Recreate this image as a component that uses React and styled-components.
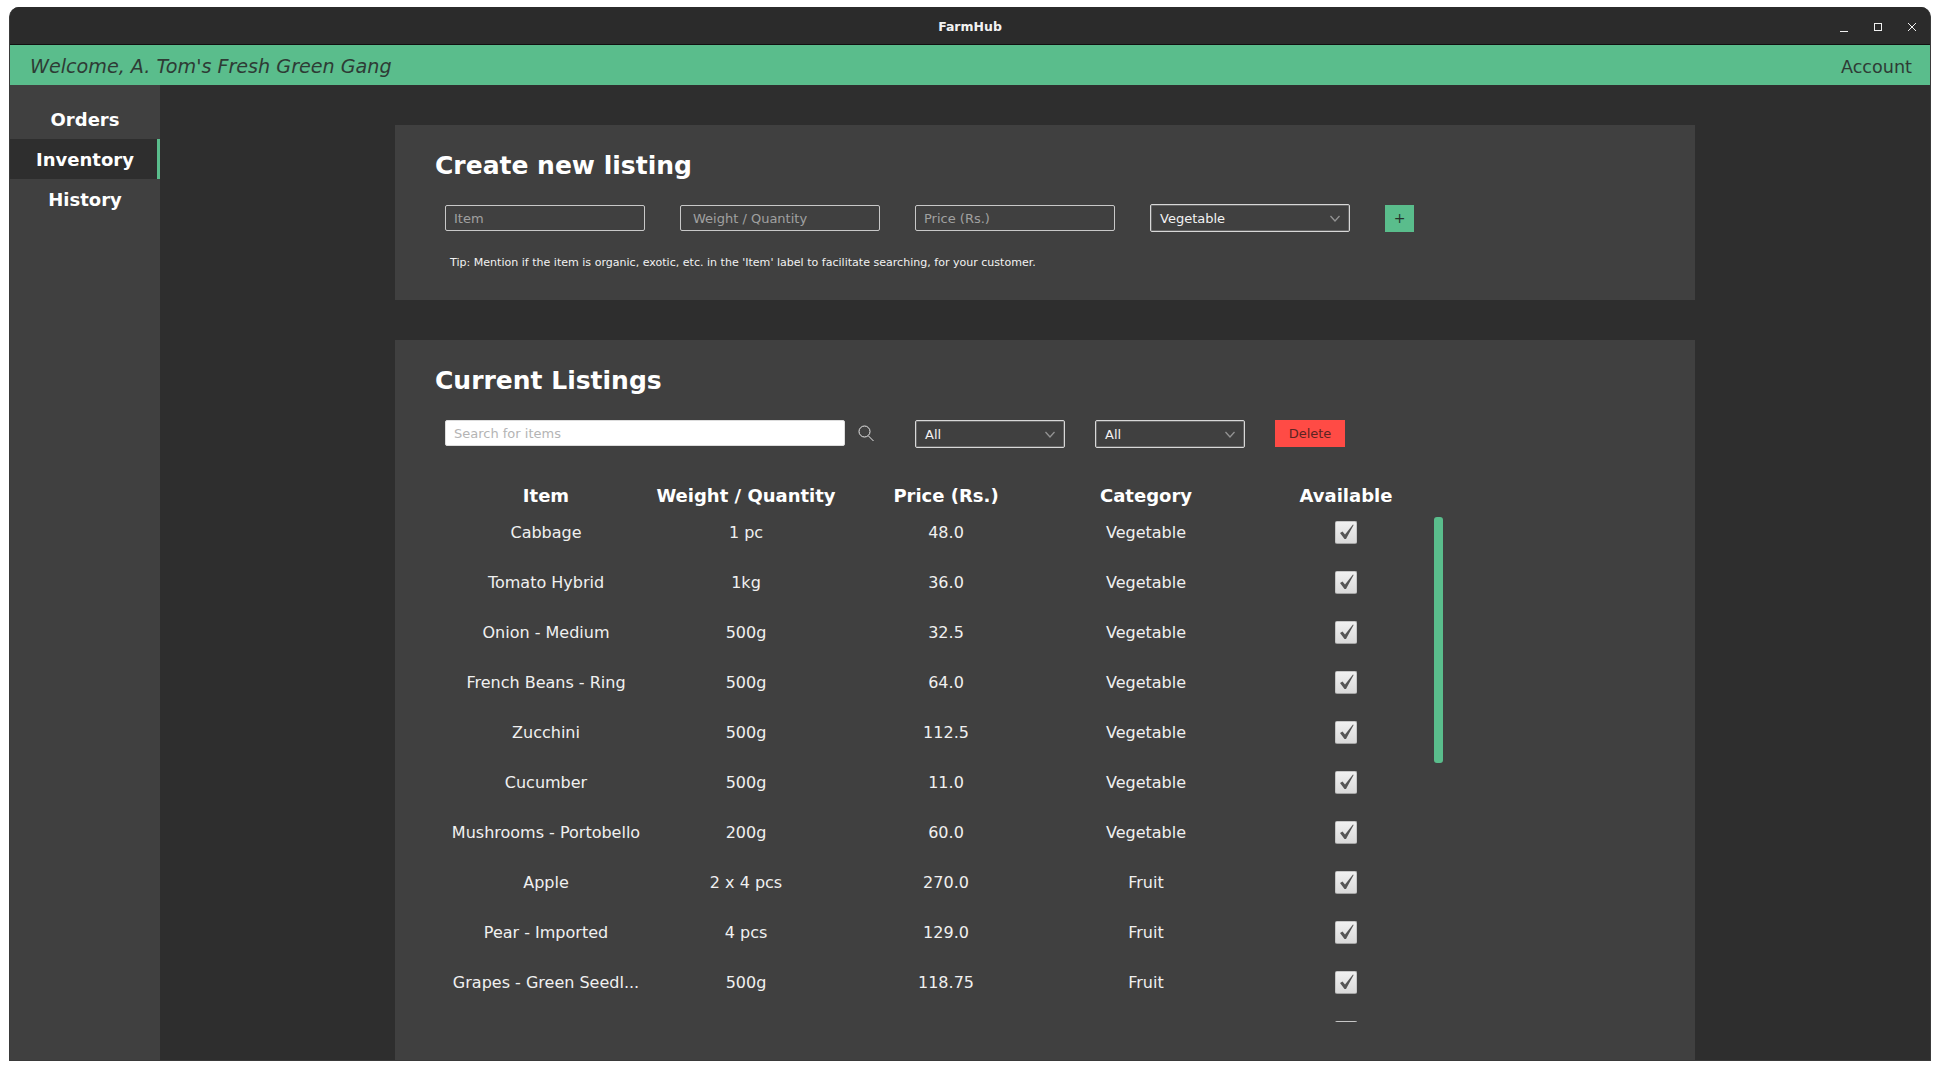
import React from 'react';
import styled, { createGlobalStyle } from 'styled-components';

const GREEN = '#5abd8c';
const FONT = '"DejaVu Sans", "Liberation Sans", sans-serif';

const listings = [
  ['Cabbage', '1 pc', '48.0', 'Vegetable'],
  ['Tomato Hybrid', '1kg', '36.0', 'Vegetable'],
  ['Onion - Medium', '500g', '32.5', 'Vegetable'],
  ['French Beans - Ring', '500g', '64.0', 'Vegetable'],
  ['Zucchini', '500g', '112.5', 'Vegetable'],
  ['Cucumber', '500g', '11.0', 'Vegetable'],
  ['Mushrooms - Portobello', '200g', '60.0', 'Vegetable'],
  ['Apple', '2 x 4 pcs', '270.0', 'Fruit'],
  ['Pear - Imported', '4 pcs', '129.0', 'Fruit'],
  ['Grapes - Green Seedl...', '500g', '118.75', 'Fruit'],
  ['', '', '', ''],
];

function Chevron() {
  return (
    <svg width="10" height="7" viewBox="0 0 10 7">
      <path d="M0.5 1 L5 6 L9.5 1" fill="none" stroke="#939393" strokeWidth="1.3" />
    </svg>
  );
}

function Select({ value, width, height }) {
  return (
    <SelectBox $width={width} $height={height}>
      <span>{value}</span>
      <Chevron />
    </SelectBox>
  );
}

function Check() {
  return (
    <CheckBox>
      <svg width="22" height="22" viewBox="0 0 22 22">
        <path d="M5 12 L7.5 10.5 L10 13.5 L18 3.5 L18.6 4 L11 18 L9.5 18 Z" fill="#555555" />
      </svg>
    </CheckBox>
  );
}

export default function App() {
  return (
    <Page>
      <GlobalStyle />
      <Window>
        <TitleBar>
          <TitleText>FarmHub</TitleText>
          <WindowControls>
            <svg width="12" height="12" viewBox="0 0 12 12">
              <path d="M2 10.5 H10" stroke="#f0f0f0" strokeWidth="1" />
            </svg>
            <svg width="12" height="12" viewBox="0 0 12 12">
              <rect x="2.5" y="2.5" width="7" height="7" fill="none" stroke="#f0f0f0" strokeWidth="1" />
            </svg>
            <svg width="12" height="12" viewBox="0 0 12 12">
              <path d="M2 2 L10 10 M10 2 L2 10" stroke="#f0f0f0" strokeWidth="1" />
            </svg>
          </WindowControls>
        </TitleBar>
        <Header>
          <Welcome>Welcome, A. Tom's Fresh Green Gang</Welcome>
          <Account>Account</Account>
        </Header>
        <Body>
          <Sidebar>
            <NavItem>Orders</NavItem>
            <NavItem $active>Inventory</NavItem>
            <NavItem>History</NavItem>
          </Sidebar>
          <Main>
            <CreatePanel>
              <PanelTitle>Create new listing</PanelTitle>
              <FormRow>
                <TextField placeholder="Item" $pad={8} />
                <TextField placeholder="Weight / Quantity" $pad={12} />
                <TextField placeholder="Price (Rs.)" $pad={8} />
                <Select value="Vegetable" width={200} height={28} />
                <AddButton>+</AddButton>
              </FormRow>
              <Tip>Tip: Mention if the item is organic, exotic, etc. in the 'Item' label to facilitate searching, for your customer.</Tip>
            </CreatePanel>
            <ListingsPanel>
              <PanelTitle>Current Listings</PanelTitle>
              <FilterRow>
                <SearchGroup>
                  <SearchField placeholder="Search for items" />
                  <svg width="16" height="17" viewBox="0 0 16 17">
                    <circle cx="6.5" cy="6.5" r="5.5" fill="none" stroke="#e8e8e8" strokeWidth="1" />
                    <path d="M10.5 11 L15.5 16" stroke="#e8e8e8" strokeWidth="1" />
                  </svg>
                </SearchGroup>
                <Filters>
                  <Select value="All" width={150} height={28} />
                  <Select value="All" width={150} height={28} />
                </Filters>
                <DeleteButton>Delete</DeleteButton>
              </FilterRow>
              <Table>
                <HeadRow>
                  <HeadCell>Item</HeadCell>
                  <HeadCell>Weight / Quantity</HeadCell>
                  <HeadCell>Price (Rs.)</HeadCell>
                  <HeadCell>Category</HeadCell>
                  <HeadCell>Available</HeadCell>
                </HeadRow>
                <ListArea>
                  <ListBody>
                    {listings.map((row, i) => (
                      <Row key={i}>
                        {row.map((cell, j) => <Cell key={j}>{cell}</Cell>)}
                        <Cell><Check /></Cell>
                      </Row>
                    ))}
                  </ListBody>
                  <ScrollThumb />
                </ListArea>
              </Table>
            </ListingsPanel>
          </Main>
        </Body>
      </Window>
    </Page>
  );
}

const GlobalStyle = createGlobalStyle`
  html, body {
    margin: 0;
    padding: 0;
    background: #ffffff;
    font-family: ${FONT};
  }
  * {
    box-sizing: border-box;
  }
`;

const Page = styled.div`
  width: 1940px;
  height: 1071px;
  padding: 7px 9px 10px 9px;
  overflow: hidden;
`;

const Window = styled.div`
  width: 1922px;
  height: 1054px;
  display: flex;
  flex-direction: column;
  background: #2e2e2e;
  border-radius: 10px 10px 0 0;
  border: 1px solid #3a3a3a;
  border-top: 0;
  overflow: hidden;
`;

const TitleBar = styled.div`
  height: 38px;
  flex: none;
  position: relative;
  display: flex;
  align-items: center;
  justify-content: center;
  padding-top: 1px;
  background: #2b2b2b;
  border-bottom: 1px solid #111111;
`;

const TitleText = styled.div`
  color: #f2f2f2;
  font-size: 12.5px;
  font-weight: 700;
`;

const WindowControls = styled.div`
  position: absolute;
  right: 12px;
  top: 14px;
  display: flex;
  gap: 22px;
`;

const Header = styled.div`
  height: 40px;
  flex: none;
  display: flex;
  align-items: center;
  justify-content: space-between;
  padding: 3px 18px 0 20px;
  background: ${GREEN};
  color: #2e3b35;
`;

const Welcome = styled.div`
  font-size: 19.15px;
  font-style: italic;
`;

const Account = styled.div`
  font-size: 17.6px;
`;

const Body = styled.div`
  flex: 1;
  min-height: 0;
  display: flex;
`;

const Sidebar = styled.nav`
  width: 150px;
  flex: none;
  padding-top: 14px;
  background: #404040;
`;

const NavItem = styled.div`
  height: 40px;
  display: flex;
  align-items: center;
  justify-content: center;
  color: #ffffff;
  font-size: 18px;
  font-weight: 700;
  background: ${p => (p.$active ? '#2e2e2e' : 'transparent')};
  box-shadow: ${p => (p.$active ? `inset -3px 0 0 ${GREEN}` : 'none')};
`;

const Main = styled.main`
  flex: 1;
  min-width: 0;
  padding: 40px 0 0 235px;
  display: flex;
  flex-direction: column;
  gap: 40px;
`;

const Panel = styled.section`
  width: 1300px;
  background: #404040;
  padding: 25px 0 0 40px;
`;

const CreatePanel = styled(Panel)`
  height: 175px;
  flex: none;
`;

const ListingsPanel = styled(Panel)`
  flex: 1;
  min-height: 0;
`;

const PanelTitle = styled.h2`
  margin: 0;
  color: #ffffff;
  font-size: 25px;
  font-weight: 700;
  line-height: 32px;
`;

const FormRow = styled.div`
  display: flex;
  align-items: center;
  gap: 35px;
  margin: 22px 0 0 10px;
`;

const TextField = styled.input`
  width: 200px;
  height: 26px;
  padding: 0 0 0 ${p => p.$pad}px;
  background: transparent;
  border: 1px solid #c8c8c8;
  border-radius: 2px;
  color: #ffffff;
  font: 13px ${FONT};
  outline: none;
  &::placeholder {
    color: #a0a0a0;
    opacity: 1;
  }
`;

const SelectBox = styled.div`
  width: ${p => p.$width}px;
  height: ${p => p.$height}px;
  flex: none;
  display: flex;
  align-items: center;
  justify-content: space-between;
  padding: 0 9px;
  border: 1px solid #d8d8d8;
  box-shadow: inset 0 0 0 1px rgba(255, 255, 255, 0.2);
  border-radius: 2px;
  color: #f2f2f2;
  font-size: 13px;
`;

const AddButton = styled.div`
  width: 29px;
  height: 27px;
  display: flex;
  align-items: center;
  justify-content: center;
  background: ${GREEN};
  color: #25332c;
  font-size: 14px;
`;

const Tip = styled.p`
  margin: 24px 0 0 15px;
  color: #f2f2f2;
  font-size: 11.05px;
  line-height: 14px;
`;

const FilterRow = styled.div`
  display: flex;
  align-items: flex-start;
  margin: 23px 0 0 10px;
`;

const SearchGroup = styled.div`
  width: 470px;
  height: 26px;
  flex: none;
  display: flex;
  align-items: center;
  gap: 13px;
`;

const SearchField = styled.input`
  width: 400px;
  height: 26px;
  padding: 0 0 0 8px;
  background: #ffffff;
  border: 1px solid #dddddd;
  border-radius: 2px;
  font: 13px ${FONT};
  outline: none;
  &::placeholder {
    color: #b4b4b4;
    opacity: 1;
  }
`;

const Filters = styled.div`
  display: flex;
  gap: 30px;
`;

const DeleteButton = styled.div`
  width: 70px;
  height: 27px;
  margin-left: 30px;
  display: flex;
  align-items: center;
  justify-content: center;
  background: #ff4b45;
  color: #5c2422;
  font-size: 13px;
`;

const Table = styled.div`
  width: 1000px;
  margin: 31px 0 0 11px;
`;

const columns = 'grid-template-columns: repeat(5, 200px);';

const HeadRow = styled.div`
  display: grid;
  ${columns}
  height: 32px;
  align-items: center;
`;

const HeadCell = styled.div`
  text-align: center;
  color: #ffffff;
  font-size: 18px;
  font-weight: 700;
`;

const ListArea = styled.div`
  position: relative;
`;

const ListBody = styled.div`
  height: 511px;
  padding-top: 1px;
  display: flex;
  flex-direction: column;
  gap: 10px;
  overflow: hidden;
`;

const Row = styled.div`
  display: grid;
  ${columns}
  height: 40px;
  flex: none;
  align-items: center;
`;

const Cell = styled.div`
  display: flex;
  justify-content: center;
  color: #f0f0f0;
  font-size: 16px;
`;

const CheckBox = styled.div`
  width: 22px;
  height: 23px;
  background: linear-gradient(#f0f0f0, #dadada);
  border: 1px solid #c6c6c6;
  border-bottom-color: #a4a4a4;
  border-radius: 2px;
  svg {
    display: block;
    margin: -1px;
  }
`;

const ScrollThumb = styled.div`
  position: absolute;
  left: 988px;
  top: 6px;
  width: 9px;
  height: 246px;
  background: ${GREEN};
  border-radius: 3px;
`;
